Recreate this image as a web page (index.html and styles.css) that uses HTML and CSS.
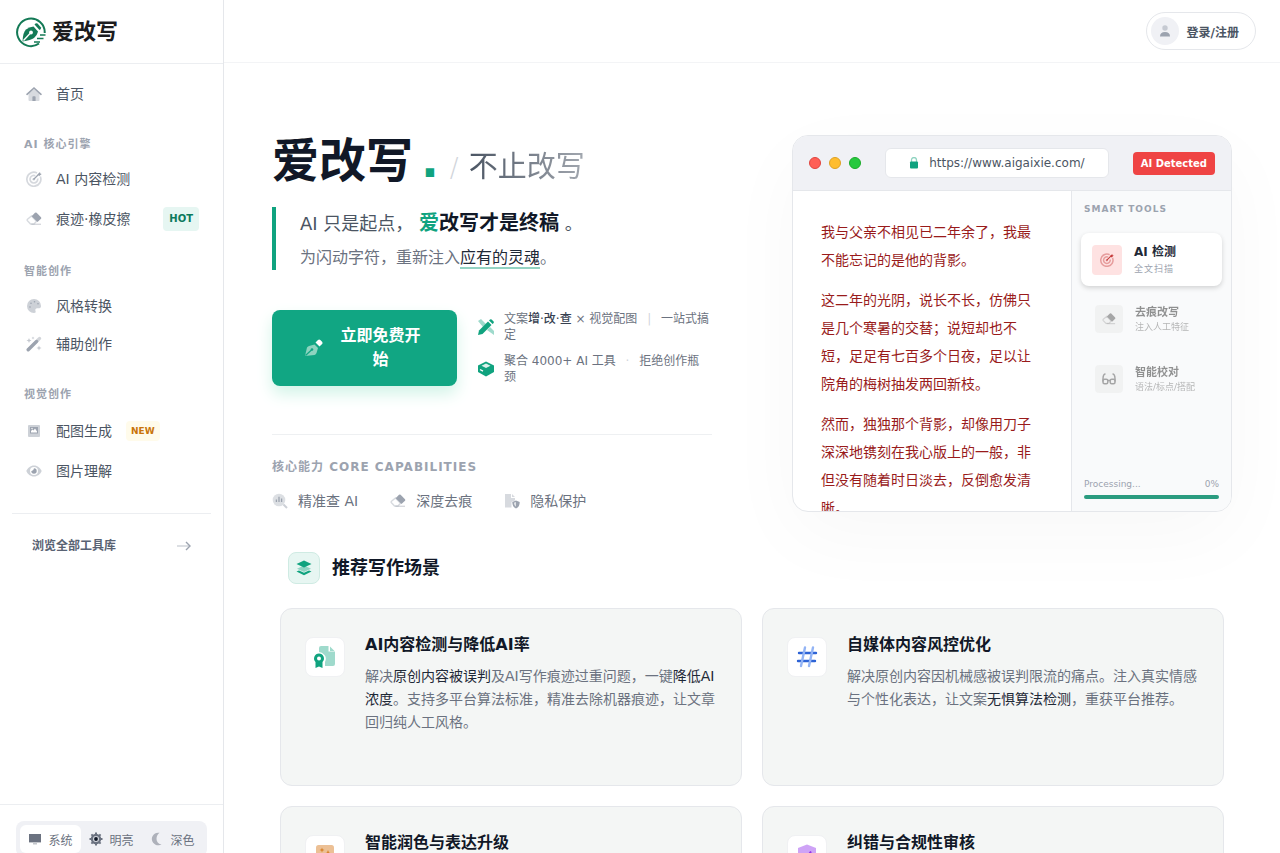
FILE: index.html
```html
<!DOCTYPE html>
<html lang="zh-CN">
<head>
  <meta charset="UTF-8" />
  <meta name="viewport" content="width=device-width, initial-scale=1.0" />
  <title>爱改写</title>
  <link rel="stylesheet" href="styles.css">
</head>
<body>
  <!-- shared icons -->
  <svg class="sprite" aria-hidden="true">
    <symbol id="i-target" viewBox="0 0 16 16">
      <path d="M11 2A7 7 0 1 0 14.300 5.500M9.300 4.700A3.800 3.800 0 1 0 11.600 7.500" fill="none" stroke="currentColor" stroke-width="1.700" opacity=".42"/>
      <circle cx="7.800" cy="8.300" r="1.300" opacity=".5"/>
      <path d="M7.500 8.500L13 3" fill="none" stroke="currentColor" stroke-width="1.300"/>
      <path d="M11.500 3.500L14 1l.3 1.500 1.400.4-2.400 2.200z"/>
    </symbol>
    <symbol id="i-eraser" viewBox="0 0 16 16">
      <path d="M5.500 5L10.500 10.300 8 13H4.500L1.500 9.800Q.8 9 1.500 8.200z" fill="none" stroke="currentColor" stroke-width="1.400" opacity=".4"/>
      <path d="M5.300 13.300H15" stroke="currentColor" stroke-width="1.400" opacity=".4"/>
      <path d="M5.600 5.200L9 1.800q.8-.7 1.600 0L15 6.300q.7.800 0 1.500L11.500 11z"/>
    </symbol>
  </svg>

  <div class="app">
    <aside class="sidebar">
      <a href="#" class="brand">
        <svg width="32" height="32" viewBox="0 0 32 32">
          <path d="M24 27.500A13.800 13.800 0 1 1 29.700 17" fill="none" stroke="#147a56" stroke-width="2"/>
          <path d="M7.500 25.500Q8 16 11 13.500 14 11 18.500 10.500L23 15.500Q22 20 19 22 16 24 7.500 25.500z" fill="#147a56"/>
          <path d="M19.500 8.500Q21 6.500 22.500 7.500L26 11.500Q26.500 13 24.500 14z" fill="#147a56"/>
          <path d="M8.500 24.500L15 17.500" stroke="#fff" stroke-width="1.400"/>
          <circle cx="16" cy="16.500" r="1.900" fill="#fff"/>
          <path d="M25 19h5.500M22 22.500h6.500M19 26h6" stroke="#147a56" stroke-width="1.600"/>
        </svg>
        <span>爱改写</span>
      </a>

      <nav class="nav">
        <a href="#" class="nav-item">
          <svg class="icon" viewBox="0 0 16 16"><path d="M2.500 7.500L8 3l5.500 4.500V14q0 1-1 1h-9q-1 0-1-1z" opacity=".4"/><path d="M1 8.300L8 2l7 6.300" fill="none" stroke="currentColor" stroke-width="1.600" stroke-linecap="round"/><path d="M6.400 15v-4q0-.8.8-.8h1.600q.8 0 .8.800v4z"/></svg>
          <span>首页</span>
        </a>
        <h2>AI 核心引擎</h2>
        <a href="#" class="nav-item">
          <svg class="icon"><use href="#i-target"/></svg>
          <span>AI 内容检测</span>
        </a>
        <a href="#" class="nav-item">
          <svg class="icon"><use href="#i-eraser"/></svg>
          <span>痕迹·橡皮擦</span>
          <b class="tag tag-hot">HOT</b>
        </a>
        <h2>智能创作</h2>
        <a href="#" class="nav-item">
          <svg class="icon" viewBox="0 0 16 16"><path d="M8 1a7 7 0 1 0 0 14c1.500 0 2-1 1.500-2-.6-1.500.2-2.800 1.800-2.800h2c1.200 0 1.700-.8 1.700-2.200A7 7 0 0 0 8 1z" opacity=".5"/><circle cx="4" cy="9" r=".8"/><circle cx="5" cy="5.300" r=".8"/><circle cx="8.500" cy="3.800" r=".8"/><circle cx="12" cy="5.800" r=".8"/></svg>
          <span>风格转换</span>
        </a>
        <a href="#" class="nav-item">
          <svg class="icon" viewBox="0 0 16 16"><path d="M2.200 13.800L10.500 5.500" stroke="currentColor" stroke-width="3.400" stroke-linecap="round"/><path d="M11.500 4.500L13.600 2.400" stroke="currentColor" stroke-width="3.200" stroke-linecap="round" opacity=".45"/><path d="M3 2l.7 1.800L5.500 4.500l-1.800.7L3 7l-.7-1.800L.5 4.500l1.800-.7zM13 9.500l.7 1.800 1.800.7-1.800.7-.7 1.800-.7-1.800-1.800-.7 1.800-.7zM7 .5l.4 1.100 1.100.4-1.100.4L7 3.500l-.4-1.100L5.500 2l1.100-.4z" opacity=".6"/></svg>
          <span>辅助创作</span>
        </a>
        <h2>视觉创作</h2>
        <a href="#" class="nav-item">
          <svg class="icon" viewBox="0 0 16 16"><rect x="2" y="2" width="12" height="12" rx="1" opacity=".5"/><path d="M4 4h8v6.500H4z"/><path d="M5 9.500V8l1.500-1.500L7.500 7.500 9 5.500l2 3v1z" fill="#fff"/><circle cx="6" cy="5.500" r=".7" fill="#fff"/></svg>
          <span>配图生成</span>
          <b class="tag tag-new">NEW</b>
        </a>
        <a href="#" class="nav-item">
          <svg class="icon" viewBox="0 0 16 16"><path d="M8 2.500C4.500 2.500 1.500 5 .3 8 1.500 11 4.500 13.500 8 13.500S14.500 11 15.700 8C14.500 5 11.500 2.500 8 2.500zM8 4a4 4 0 1 1 0 8 4 4 0 0 1 0-8z" fill-rule="evenodd" opacity=".5"/><path d="M8 5.300A2.700 2.700 0 1 1 5.300 8Q7.500 8.300 8 5.300z"/></svg>
          <span>图片理解</span>
        </a>
        <div class="all-tools">
          <a href="#">
            <span>浏览全部工具库</span>
            <svg width="14" height="14" viewBox="0 0 14 14" fill="none" stroke="#9ca3af" stroke-width="1.400"><path d="M0 7h12" opacity=".5"/><path d="M9 3l4 4-4 4"/></svg>
          </a>
        </div>
      </nav>

      <div class="sidebar-footer">
        <div class="theme">
          <button type="button" class="active">
            <svg width="14" height="14" viewBox="0 0 14 14"><path d="M1 2h12v8H1z"/><path d="M1 10h12v1H1zM5 11h4v1.500H5z" opacity=".4"/></svg>
            系统
          </button>
          <button type="button">
            <svg width="14" height="14" viewBox="0 0 14 14"><circle cx="7" cy="7" r="4" fill="none" stroke="currentColor" stroke-width="2.400"/><path d="M7 .5v13M.5 7h13M2.400 2.400l9.200 9.200M11.600 2.400l-9.200 9.200" stroke="currentColor" stroke-width="2"/><circle cx="7" cy="7" r="3" fill="#d1d5db"/><circle cx="7" cy="7" r="1.900" fill="#111827"/></svg>
            明亮
          </button>
          <button type="button">
            <svg width="14" height="14" viewBox="0 0 14 14"><path d="M9.500.8A6.300 6.300 0 1 0 11.500 12.300 5.300 5.300 0 0 1 6.500 7Q6.500 3 9.500.8z" opacity=".5"/></svg>
            深色
          </button>
        </div>
      </div>
    </aside>

    <main class="main">
      <header class="topbar">
        <button type="button" class="login">
          <span class="avatar"><svg width="14" height="14" viewBox="0 0 14 14"><circle cx="7" cy="4" r="2.700" opacity=".5"/><path d="M2 12.500Q2 8 7 8t5 4.500z"/></svg></span>
          登录/注册
        </button>
      </header>

      <section class="hero">
        <div class="intro">
          <h1>爱改写<span class="dot">.</span><span class="slash">/</span><span class="more">不止改写</span></h1>
          <blockquote>
            <p class="lead">AI 只是起点， <strong><em>爱</em>改写才是终稿</strong> 。</p>
            <p>为闪动字符，重新注入<u>应有的灵魂</u>。</p>
          </blockquote>

          <div class="cta">
            <button type="button" class="start">
              <svg width="20" height="20" viewBox="0 0 20 20"><path d="M1 18L3 9.500Q3.500 8.500 5 8l5.500-1.500L14 10l-1.500 5q-.5 1.500-2 2z" fill="#8dd4bf"/><path d="M1.500 17.500L8 11.500" stroke="#11a683" stroke-width="1.200"/><circle cx="8" cy="11.500" r="1.300" fill="#11a683"/><path d="M11.500 4.500l2.500-2.500q1.200-1 2.300 0l1.800 1.800q1 1.200 0 2.300L15.500 8.500z" fill="#fff"/></svg>
              <span>立即免费开始</span>
            </button>
            <ul class="points">
              <li>
                <svg width="18" height="18" viewBox="0 0 18 18"><path d="M1 3l3-2 5 5-3 3zM10 12l3-3 4 4v4z" opacity=".4"/><path d="M1 17l1-4.500L11 3.500 14.500 7l-9 9z"/><path d="M12 2.500l1-1q.8-.7 1.600 0l2 2q.7.800 0 1.600l-1 1z"/></svg>
                <span>文案<b>增·改·查</b> × 视觉配图 <i>|</i> 一站式搞定</span>
              </li>
              <li>
                <svg width="18" height="18" viewBox="0 0 18 18"><path d="M9 1.500L17 5.500V12L9 16.500 1 12V5.500z"/><path d="M4.500 5.800L9 3.500l4.500 2.300L9 8z" fill="#fff" opacity=".85"/><path d="M3 9.500l3 1.600" stroke="#fff" stroke-width="1.400"/></svg>
                <span>聚合 4000+ AI 工具 <i>·</i> 拒绝创作瓶颈</span>
              </li>
            </ul>
          </div>

          <div class="core">
            <h2>核心能力 CORE CAPABILITIES</h2>
            <ul>
              <li><svg class="icon" viewBox="0 0 16 16"><path d="M7 .7a6.300 6.300 0 1 0 0 12.600A6.300 6.300 0 0 0 7 .7z" opacity=".35"/><path d="M11.500 11.500L15 15" stroke="currentColor" stroke-width="2" opacity=".5"/><path d="M4.400 6.500V9M7 3.800V9M9.600 5.500V9" stroke="currentColor" stroke-width="1.300"/></svg>精准查 AI</li>
              <li><svg class="icon"><use href="#i-eraser"/></svg>深度去痕</li>
              <li><svg class="icon" viewBox="0 0 16 16"><path d="M1 1h6v4h4v2.500L7.500 9v5.500H1zM8 1l3 3H8z" opacity=".4"/><path d="M12 7.500l3.700 1.400q0 5-3.700 6.600-3.700-1.600-3.700-6.600z"/><path d="M12 9v4.800q-2-1.300-2.200-4z" fill="#fff" opacity=".7"/></svg>隐私保护</li>
            </ul>
          </div>
        </div>

        <div class="window">
          <div class="window-bar">
            <div class="lights"><span></span><span></span><span></span></div>
            <div class="url">
              <svg width="10" height="12" viewBox="0 0 10 12"><path d="M2.500 5V3a2.500 2.500 0 0 1 5 0v2" fill="none" stroke="#8fd3c0" stroke-width="1.300"/><rect x="1" y="4.500" width="8" height="7" rx="1" fill="#10a37f"/></svg>
              https://www.aigaixie.com/
            </div>
            <span class="detected">AI Detected</span>
          </div>
          <div class="window-body">
            <div class="article">
              <p>我与父亲不相见已二年余了，我最不能忘记的是他的背影。</p>
              <p>这二年的光阴，说长不长，仿佛只是几个寒暑的交替；说短却也不短，足足有七百多个日夜，足以让院角的梅树抽发两回新枝。</p>
              <p>然而，独独那个背影，却像用刀子深深地镌刻在我心版上的一般，非但没有随着时日淡去，反倒愈发清晰。</p>
            </div>
            <div class="tools">
              <h3>SMART TOOLS</h3>
              <div class="tool current">
                <span class="tool-icon"><svg width="14" height="14"><use href="#i-target"/></svg></span>
                <div><strong>AI 检测</strong><small>全文扫描</small></div>
              </div>
              <div class="tool">
                <span class="tool-icon"><svg width="14" height="14"><use href="#i-eraser"/></svg></span>
                <div><strong>去痕改写</strong><small>注入人工特征</small></div>
              </div>
              <div class="tool">
                <span class="tool-icon"><svg width="14" height="14" viewBox="0 0 14 14" fill="none" stroke="currentColor" stroke-width="1.500"><path d="M3.500 2Q1 2 1 7v2.500M10.500 2Q13 2 13 7v2.500M6 8.500h2"/><rect x="1" y="7.200" width="4.800" height="4.600" rx="1.500"/><rect x="8.200" y="7.200" width="4.800" height="4.600" rx="1.500"/></svg></span>
                <div><strong>智能校对</strong><small>语法/标点/搭配</small></div>
              </div>
              <div class="progress">
                <div><span>Processing...</span><span>0%</span></div>
                <div class="bar"></div>
              </div>
            </div>
          </div>
        </div>
      </section>

      <section class="scenes">
        <div class="scenes-title">
          <span><svg width="16" height="16" viewBox="0 0 16 16" fill="#10a37f"><path d="M8 5.500l7 3.200L8 12 1 8.700z" opacity=".4"/><path d="M8 .5l7.500 3.500L8 7.500.5 4z"/><path d="M.5 11.500l2.500-1 5 2.200 5-2.200 2.500 1L8 15.200z"/></svg></span>
          <h2>推荐写作场景</h2>
        </div>
        <div class="cards">
          <a href="#" class="card">
            <span class="card-icon green"><svg width="24" height="24" viewBox="0 0 24 24"><path d="M8 1h7.500v5.500H22V19q0 2-2 2h-8v-4q2-4-.5-7T6 7V3q0-2 2-2zM17 1.500L21.500 6H17z" opacity=".4"/><path d="M6 8.500a5 5 0 0 1 3.500 8.500v6L6 21.500 2.500 23v-6A5 5 0 0 1 6 8.500z"/><circle cx="6" cy="13.500" r="2" fill="#fff"/></svg></span>
            <div>
              <h3>AI内容检测与降低AI率</h3>
              <p>解决<b>原创内容被误判</b>及AI写作痕迹过重问题，一键<b>降低AI浓度</b>。支持多平台算法标准，精准去除机器痕迹，让文章回归纯人工风格。</p>
            </div>
          </a>
          <a href="#" class="card">
            <span class="card-icon blue"><svg width="24" height="24" viewBox="0 0 24 24" fill="none" stroke="currentColor" stroke-width="2.400" stroke-linecap="round"><path d="M4 8h17M3 16h17"/><path d="M10 2.500L6 21M18 2.500L14 21" stroke="#93b4f5"/></svg></span>
            <div>
              <h3>自媒体内容风控优化</h3>
              <p>解决原创内容因机械感被误判限流的痛点。注入真实情感与个性化表达，让文案<b>无惧算法检测</b>，重获平台推荐。</p>
            </div>
          </a>
          <a href="#" class="card">
            <span class="card-icon orange"><svg width="24" height="24" viewBox="0 0 24 24"><rect x="3" y="2" width="18" height="19" rx="2.500" opacity=".5"/><path d="M9 4.500l.7 1.800 1.800.7-1.800.7L9 9.500l-.7-1.800L6.500 7l1.800-.7zM15 7l1 2.500 2.500 1-2.500 1L15 14l-1-2.500-2.500-1 2.500-1z"/></svg></span>
            <div>
              <h3>智能润色与表达升级</h3>
            </div>
          </a>
          <a href="#" class="card">
            <span class="card-icon purple"><svg width="24" height="24" viewBox="0 0 24 24"><path d="M12 1.500l9 3.500v6q0 8-9 12-9-4-9-12V5z" opacity=".45"/><path d="M7.500 12l3.500 3.500 5-7" fill="none" stroke="currentColor" stroke-width="2"/></svg></span>
            <div>
              <h3>纠错与合规性审核</h3>
            </div>
          </a>
        </div>
      </section>
    </main>
  </div>
</body>
</html>
```
FILE: styles.css
```css
* {
  box-sizing: border-box;
}
body {
  margin: 0;
  font-family: "DejaVu Sans", "Noto Sans CJK SC", sans-serif;
  font-size: 14px;
  color: #4b5563;
  background: #fff;
}
h1, h2, h3, p, ul, blockquote {
  margin: 0;
  padding: 0;
}
ul {
  list-style: none;
}
a {
  color: inherit;
  text-decoration: none;
}
button {
  font-family: inherit;
  border: 0;
  cursor: pointer;
}
svg {
  flex-shrink: 0;
}
svg:not([fill]) {
  fill: currentColor;
}
.sprite {
  position: absolute;
  width: 0;
  height: 0;
}
.icon {
  width: 16px;
  height: 16px;
  color: #9ca3af;
}
.app {
  display: flex;
  height: 100vh;
  overflow: hidden;
}

/* sidebar */
.sidebar {
  display: flex;
  flex-direction: column;
  flex: 0 0 224px;
  height: calc(100vh + 20px);
  border-right: 1px solid #e5e7eb;
}
.brand {
  display: flex;
  align-items: center;
  gap: 5px;
  flex: 0 0 64px;
  padding: 0 15px;
  border-bottom: 1px solid #eceef1;
  font-size: 22px;
  font-weight: bold;
  color: #1c1c1e;
}
.brand span {
  padding-bottom: 5px;
}
.nav {
  flex: 1;
  padding: 12px;
}
.nav h2 {
  margin: 25px 12px 8px;
  font-size: 11px;
  line-height: 16px;
  letter-spacing: 1px;
  color: #9ca3af;
}
.nav-item {
  display: flex;
  align-items: center;
  gap: 14px;
  min-height: 36px;
  padding: 0 12px 0 14px;
  line-height: 20px;
}
.nav-item + .nav-item {
  margin-top: 2px;
}
.tag {
  border-radius: 4px;
  line-height: 16px;
}
.tag-hot {
  margin: 8px 0 8px auto;
  padding: 4px 6px;
  font-size: 10px;
  color: #0b7a5c;
  background: #e6f6f2;
}
.tag-new {
  margin: 10px 0;
  padding: 2px 5px;
  font-size: 9px;
  color: #c9740a;
  background: #fffbeb;
}
.all-tools {
  margin-top: 24px;
  padding-top: 14px;
  border-top: 1px solid #eceef1;
}
.all-tools a {
  display: flex;
  align-items: center;
  justify-content: space-between;
  padding: 8px 20px;
  font-size: 12px;
  line-height: 20px;
  font-weight: bold;
  color: #596273;
}
.sidebar-footer {
  padding: 16px;
  border-top: 1px solid #eceef1;
}
.theme {
  display: flex;
  padding: 4px;
  border-radius: 8px;
  background: #f0f1f5;
}
.theme button {
  display: flex;
  flex: 1;
  align-items: center;
  justify-content: center;
  gap: 6px;
  height: 28px;
  padding: 0;
  border-radius: 6px;
  font-size: 12px;
  color: #6b7280;
  background: none;
}
.theme .active {
  background: #fff;
}

/* main area */
.main {
  flex: 1;
  min-width: 0;
  overflow: hidden;
}
.topbar {
  display: flex;
  align-items: center;
  justify-content: flex-end;
  height: 63px;
  padding: 0 24px;
  border-bottom: 1px solid #f3f4f6;
}
.login {
  display: flex;
  align-items: center;
  gap: 8px;
  height: 38px;
  padding: 0 16px 0 4px;
  border: 1px solid #e5e7eb;
  border-radius: 19px;
  font-size: 12px;
  font-weight: bold;
  color: #4b5563;
  background: #fff;
}
.avatar {
  display: flex;
  align-items: center;
  justify-content: center;
  width: 28px;
  height: 28px;
  border-radius: 50%;
  color: #9ca3af;
  background: #f0f1f5;
}

/* hero */
.hero {
  display: grid;
  grid-template-columns: 1fr 1fr;
  gap: 80px;
  align-items: start;
  padding: 72px 48px 0;
}
.intro {
  min-width: 0;
}
h1 {
  display: flex;
  align-items: baseline;
  font-size: 47px;
  line-height: 52px;
  color: #111827;
  white-space: nowrap;
}
.dot {
  margin-left: 8px;
  color: #10a37f;
}
.slash {
  margin: 0 10px 0 11px;
  font-size: 26px;
  line-height: 32px;
  font-weight: 200;
  color: #d1d5db;
}
.more {
  font-size: 29px;
  line-height: 32px;
  font-weight: 400;
  color: transparent;
  background: linear-gradient(90deg, #4b5563, #a3a8b0);
  background-clip: text;
}
blockquote {
  margin-top: 20px;
  padding-left: 24px;
  border-left: 4px solid #10a37f;
}
blockquote p {
  font-size: 16px;
  line-height: 24px;
  color: #6b7280;
}
blockquote .lead {
  margin-bottom: 6px;
  font-size: 18px;
  line-height: 32px;
  color: #4b5563;
}
.lead strong {
  font-size: 20px;
  color: #111827;
}
.lead em {
  font-style: normal;
  color: #10a37f;
}
blockquote u {
  text-decoration: none;
  color: #1f2937;
  border-bottom: 2px solid #93d3c3;
}
.cta {
  display: flex;
  align-items: center;
  gap: 20px;
  margin-top: 40px;
}
.start {
  display: flex;
  align-items: center;
  gap: 12px;
  flex: 0 0 185px;
  padding: 14px 32px;
  border-radius: 8px;
  font-size: 16px;
  line-height: 24px;
  font-weight: bold;
  color: #fff;
  background: #11a683;
  box-shadow: 0 8px 16px #d3f4e8;
}
.points {
  display: grid;
  gap: 10px;
  padding-right: 2px;
  font-size: 12px;
  line-height: 16px;
  color: #6b7280;
}
.points li {
  display: flex;
  align-items: center;
  gap: 9px;
}
.points svg {
  color: #10a37f;
}
.points b {
  font-weight: 500;
  color: #374151;
}
.points i {
  margin: 0 6px;
  font-style: normal;
  color: #d1d5db;
}
.core {
  margin-top: 48px;
  padding-top: 22px;
  border-top: 1px solid #eef0f2;
}
.core h2 {
  font-size: 12px;
  line-height: 20px;
  letter-spacing: 1px;
  color: #9ca3af;
}
.core ul {
  display: flex;
  gap: 32px;
  margin-top: 14px;
}
.core li {
  display: flex;
  align-items: center;
  gap: 10px;
  line-height: 20px;
  color: #6b7280;
}

/* browser mock */
.window {
  height: 377px;
  overflow: hidden;
  display: flex;
  flex-direction: column;
  border: 1px solid #e5e7eb;
  border-radius: 16px;
  background: #fff;
  box-shadow: 0 24px 80px rgba(0, 0, 0, 0.03);
}
.window-bar {
  display: flex;
  align-items: center;
  gap: 24px;
  flex: 0 0 55px;
  padding: 0 16px;
  border-bottom: 1px solid #e5e7eb;
  background: #f0f1f5;
}
.lights {
  display: flex;
  gap: 8px;
}
.lights span {
  width: 12px;
  height: 12px;
  border: 1px solid #e0443e;
  border-radius: 50%;
  background: #ff5f56;
}
.lights span:nth-child(2) {
  border-color: #dea123;
  background: #ffbd2e;
}
.lights span:nth-child(3) {
  border-color: #1aab29;
  background: #27c93f;
}
.url {
  display: flex;
  flex: 1;
  align-items: center;
  justify-content: center;
  gap: 10px;
  height: 30px;
  border: 1px solid #e5e7eb;
  border-radius: 6px;
  font-size: 12px;
  background: #fff;
}
.detected {
  padding: 0 8px;
  border-radius: 4px;
  font-size: 10px;
  line-height: 23px;
  font-weight: bold;
  color: #fff;
  background: #ef4444;
}
.window-body {
  display: flex;
  flex: 1;
  min-height: 0;
}
.article {
  flex: 1;
  padding: 27px 28px;
  line-height: 28px;
  color: #991b1b;
}
.article p {
  margin-bottom: 12px;
}
.tools {
  display: flex;
  flex-direction: column;
  flex: 0 0 160px;
  padding: 10px 12px 12px;
  border-left: 1px solid #e5e7eb;
  background: #f9fafb;
}
.tools h3 {
  margin-bottom: 16px;
  font-size: 9px;
  line-height: 16px;
  letter-spacing: 1px;
  color: #9ca3af;
}
.tool {
  display: flex;
  align-items: center;
  gap: 12px;
  height: 60px;
  padding: 0 11px;
  filter: grayscale(1);
  opacity: 0.5;
}
.tool.current {
  height: 53px;
  margin: 0 -3px 3px;
  border-radius: 8px;
  background: #fff;
  box-shadow: 0 2px 5px rgba(0, 0, 0, 0.16);
  filter: none;
  opacity: 1;
}
.tool-icon {
  display: flex;
  align-items: center;
  justify-content: center;
  flex: 0 0 28px;
  height: 28px;
  border-radius: 4px;
  color: #4b5563;
  background: #e9ebed;
}
.current .tool-icon {
  flex-basis: 30px;
  height: 30px;
  color: #c53b3b;
  background: #fee2e2;
}
.tool strong, .tool small {
  display: block;
  white-space: nowrap;
}
.tool strong {
  font-size: 11px;
  line-height: 16px;
  color: #1f2937;
}
.tool small {
  font-size: 9px;
  line-height: 12px;
  color: #6b7280;
}
.current strong {
  font-size: 12px;
  line-height: 18px;
}
.current small {
  line-height: 16px;
  letter-spacing: 1px;
  color: #9ca3af;
}
.progress {
  margin-top: auto;
  font-size: 9px;
  line-height: 12px;
  color: #9ca3af;
}
.progress div {
  display: flex;
  justify-content: space-between;
}
.progress .bar {
  height: 4px;
  margin-top: 5px;
  border-radius: 2px;
  background: #2b9c80;
}

/* scenes */
.scenes {
  padding: 40px 56px;
}
.scenes-title {
  display: flex;
  align-items: center;
  gap: 12px;
  padding: 0 8px;
}
.scenes-title span {
  display: flex;
  align-items: center;
  justify-content: center;
  width: 32px;
  height: 32px;
  border: 1px solid #cfebe3;
  border-radius: 8px;
  background: #e7f6f2;
}
.scenes-title h2 {
  font-size: 18px;
  line-height: 28px;
  color: #111827;
}
.cards {
  display: grid;
  grid-template-columns: 1fr 1fr;
  gap: 20px;
  margin-top: 24px;
}
.card {
  display: flex;
  align-items: flex-start;
  gap: 20px;
  min-height: 178px;
  padding: 24px;
  border: 1px solid #e5e7eb;
  border-radius: 12px;
  background: #f4f6f5;
}
.card-icon {
  display: flex;
  align-items: center;
  justify-content: center;
  flex: 0 0 40px;
  height: 40px;
  margin-top: 4px;
  border: 1px solid #f0f1f3;
  border-radius: 8px;
  background: #fff;
}
.green { color: #10a37f; }
.blue { color: #2d63d6; }
.orange { color: #d9822b; }
.purple { color: #9333ea; }
.card h3 {
  margin-bottom: 8px;
  font-size: 16px;
  line-height: 24px;
  color: #111827;
}
.card p {
  line-height: 23px;
  color: #6b7280;
}
.card b {
  font-weight: 400;
  color: #1f2937;
}

@media (max-width: 900px) {
  .hero, .cards {
    grid-template-columns: 1fr;
  }
  .main {
    overflow-y: auto;
  }
}
```
